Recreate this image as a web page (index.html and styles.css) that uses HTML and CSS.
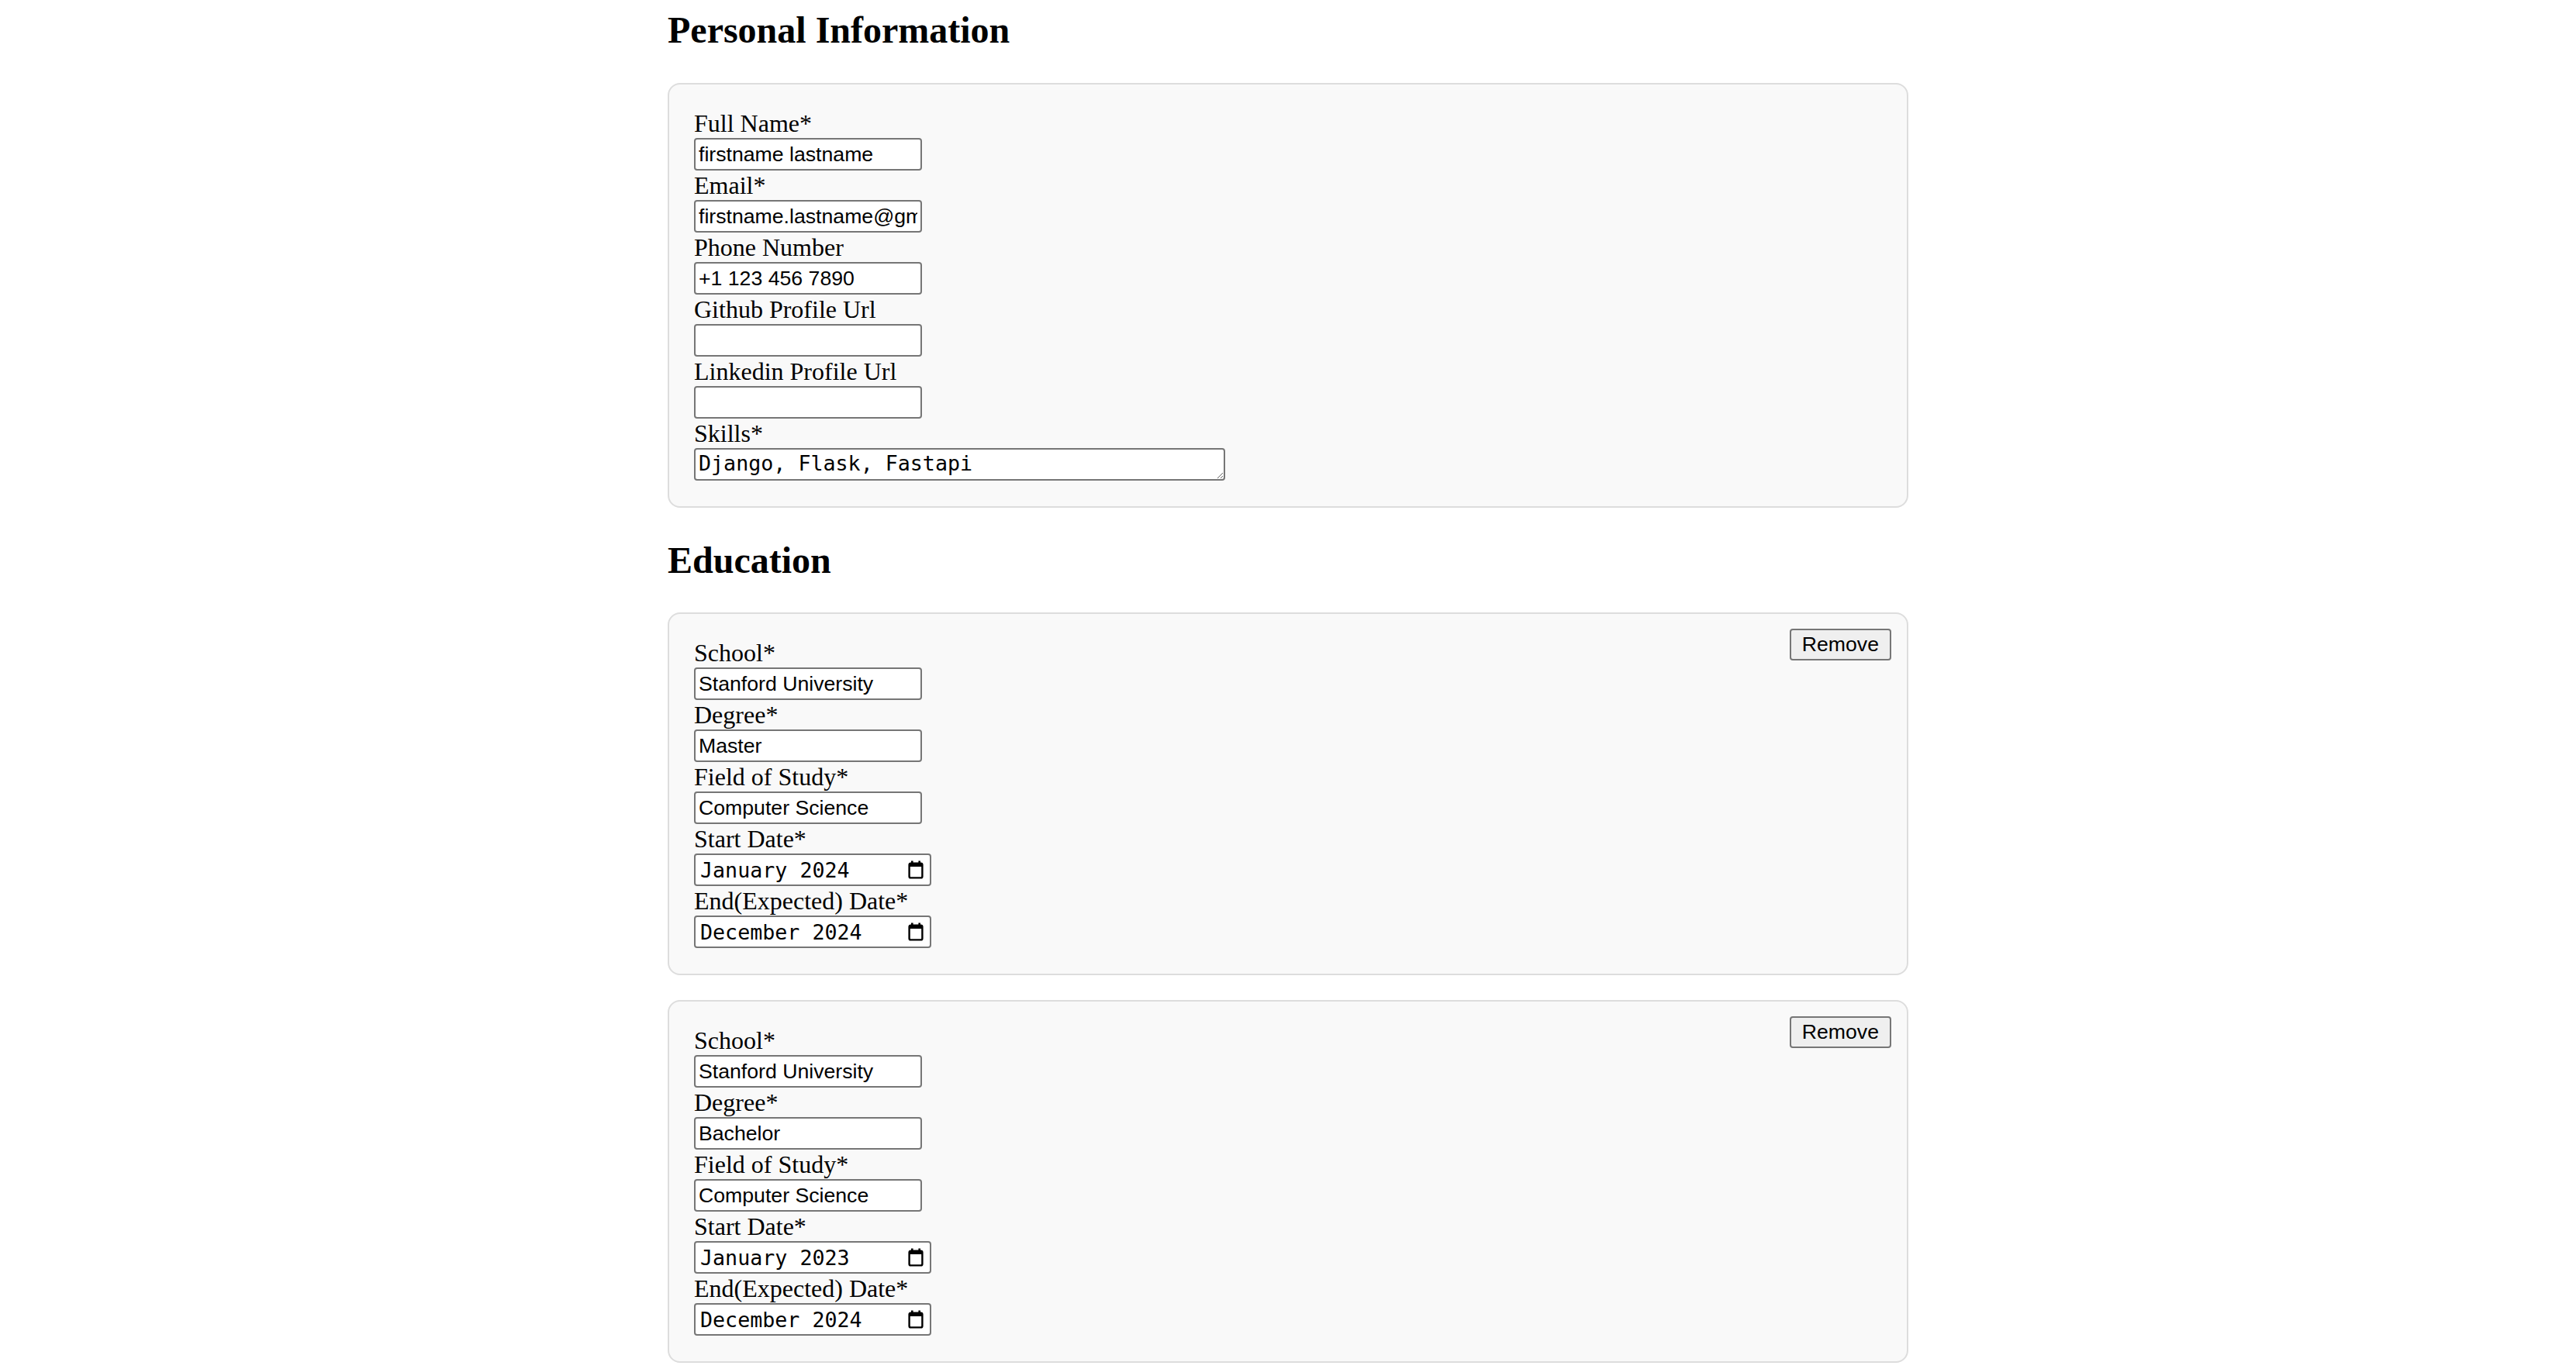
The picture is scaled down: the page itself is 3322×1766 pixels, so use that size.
FILE: index.html
```html
<!DOCTYPE html>
<html lang="en">
<head>
<meta charset="utf-8">
<title>Resume Form</title>
<link rel="stylesheet" href="styles.css">
</head>
<body>
<main class="page">
  <h2 class="section-title first">Personal Information</h2>
  <div class="card">
    <label class="field-label" for="fullname">Full Name*</label>
    <input class="text-input" id="fullname" type="text" value="firstname lastname">
    <label class="field-label" for="email">Email*</label>
    <input class="text-input" id="email" type="email" value="firstname.lastname@gmail.com">
    <label class="field-label" for="phone">Phone Number</label>
    <input class="text-input" id="phone" type="tel" value="+1 123 456 7890">
    <label class="field-label" for="github">Github Profile Url</label>
    <input class="text-input" id="github" type="url" value="">
    <label class="field-label" for="linkedin">Linkedin Profile Url</label>
    <input class="text-input" id="linkedin" type="url" value="">
    <label class="field-label" for="skills">Skills*</label>
    <textarea class="skills-input" id="skills" rows="1" spellcheck="false">Django, Flask, Fastapi</textarea>
  </div>

  <h2 class="section-title">Education</h2>
  <div class="card">
    <button class="remove-btn" type="button">Remove</button>
    <label class="field-label" for="school1">School*</label>
    <input class="text-input" id="school1" type="text" value="Stanford University">
    <label class="field-label" for="degree1">Degree*</label>
    <input class="text-input" id="degree1" type="text" value="Master">
    <label class="field-label" for="field1">Field of Study*</label>
    <input class="text-input" id="field1" type="text" value="Computer Science">
    <label class="field-label">Start Date*</label>
    <div class="month-field">
      <span class="month-value">January 2024</span>
      <svg class="calendar-icon" width="20" height="24" viewBox="0 0 20 24" aria-hidden="true">
        <rect x="4" y="0.5" width="2.6" height="4" fill="#000"/>
        <rect x="13.4" y="0.5" width="2.6" height="4" fill="#000"/>
        <rect x="1.6" y="3.6" width="16.8" height="18.8" rx="2" fill="none" stroke="#000" stroke-width="2.4"/>
        <rect x="1.6" y="3.6" width="16.8" height="4.4" fill="#000"/>
      </svg>
    </div>
    <label class="field-label">End(Expected) Date*</label>
    <div class="month-field">
      <span class="month-value">December 2024</span>
      <svg class="calendar-icon" width="20" height="24" viewBox="0 0 20 24" aria-hidden="true">
        <rect x="4" y="0.5" width="2.6" height="4" fill="#000"/>
        <rect x="13.4" y="0.5" width="2.6" height="4" fill="#000"/>
        <rect x="1.6" y="3.6" width="16.8" height="18.8" rx="2" fill="none" stroke="#000" stroke-width="2.4"/>
        <rect x="1.6" y="3.6" width="16.8" height="4.4" fill="#000"/>
      </svg>
    </div>
  </div>

  <div class="card">
    <button class="remove-btn" type="button">Remove</button>
    <label class="field-label" for="school2">School*</label>
    <input class="text-input" id="school2" type="text" value="Stanford University">
    <label class="field-label" for="degree2">Degree*</label>
    <input class="text-input" id="degree2" type="text" value="Bachelor">
    <label class="field-label" for="field2">Field of Study*</label>
    <input class="text-input" id="field2" type="text" value="Computer Science">
    <label class="field-label">Start Date*</label>
    <div class="month-field">
      <span class="month-value">January 2023</span>
      <svg class="calendar-icon" width="20" height="24" viewBox="0 0 20 24" aria-hidden="true">
        <rect x="4" y="0.5" width="2.6" height="4" fill="#000"/>
        <rect x="13.4" y="0.5" width="2.6" height="4" fill="#000"/>
        <rect x="1.6" y="3.6" width="16.8" height="18.8" rx="2" fill="none" stroke="#000" stroke-width="2.4"/>
        <rect x="1.6" y="3.6" width="16.8" height="4.4" fill="#000"/>
      </svg>
    </div>
    <label class="field-label">End(Expected) Date*</label>
    <div class="month-field">
      <span class="month-value">December 2024</span>
      <svg class="calendar-icon" width="20" height="24" viewBox="0 0 20 24" aria-hidden="true">
        <rect x="4" y="0.5" width="2.6" height="4" fill="#000"/>
        <rect x="13.4" y="0.5" width="2.6" height="4" fill="#000"/>
        <rect x="1.6" y="3.6" width="16.8" height="18.8" rx="2" fill="none" stroke="#000" stroke-width="2.4"/>
        <rect x="1.6" y="3.6" width="16.8" height="4.4" fill="#000"/>
      </svg>
    </div>
  </div>
</main>
</body>
</html>
```

FILE: styles.css
```css
html,
body {
  margin: 0;
  padding: 0;
  background: #ffffff;
}

body {
  font-family: "Liberation Serif", "Times New Roman", serif;
  color: #000000;
}

.page {
  max-width: 1600px;
  margin: 0 auto;
  padding-top: 11px;
}

.section-title {
  font-size: 48px;
  font-weight: bold;
  line-height: 55px;
  margin: 40px 0;
}

.section-title.first {
  margin-top: 0;
  margin-bottom: 41px;
}

.card {
  background: #f9f9f9;
  border: 2px solid #dddddd;
  border-radius: 16px;
  padding: 31px 32px 33px;
  margin-bottom: 32px;
}

.field-label {
  display: block;
  font-size: 32px;
  line-height: 38px;
}

.text-input {
  display: block;
  box-sizing: border-box;
  width: 294px;
  height: 42px;
  margin: 0;
  padding: 2px 4px;
  border: 2px solid #767676;
  border-radius: 4px;
  background: #ffffff;
  color: #000000;
  font-family: "Liberation Sans", Arial, sans-serif;
  font-size: 26.67px;
  outline: none;
}

.month-field {
  box-sizing: border-box;
  width: 306px;
  height: 42px;
  display: flex;
  align-items: center;
  justify-content: space-between;
  padding: 0 8px 0 6px;
  border: 2px solid #767676;
  border-radius: 4px;
  background: #ffffff;
}

.month-value {
  font-family: "DejaVu Sans Mono", monospace;
  font-size: 26.67px;
  line-height: 31px;
  color: #000000;
  white-space: pre;
}

.calendar-icon {
  display: block;
  flex: none;
}

.skills-input {
  display: block;
  box-sizing: border-box;
  width: 685px;
  height: 42px;
  margin: 0;
  padding: 2px 4px;
  border: 2px solid #767676;
  border-radius: 4px;
  background: #ffffff;
  color: #000000;
  font-family: "DejaVu Sans Mono", monospace;
  font-size: 26.67px;
  line-height: normal;
  resize: both;
}

.remove-btn {
  float: right;
  margin: -12px -12px 0 0;
  height: 41px;
  padding: 0 14px;
  border: 2px solid #767676;
  border-radius: 4px;
  background: #efefef;
  color: #000000;
  font-family: "Liberation Sans", Arial, sans-serif;
  font-size: 26.67px;
}
```
